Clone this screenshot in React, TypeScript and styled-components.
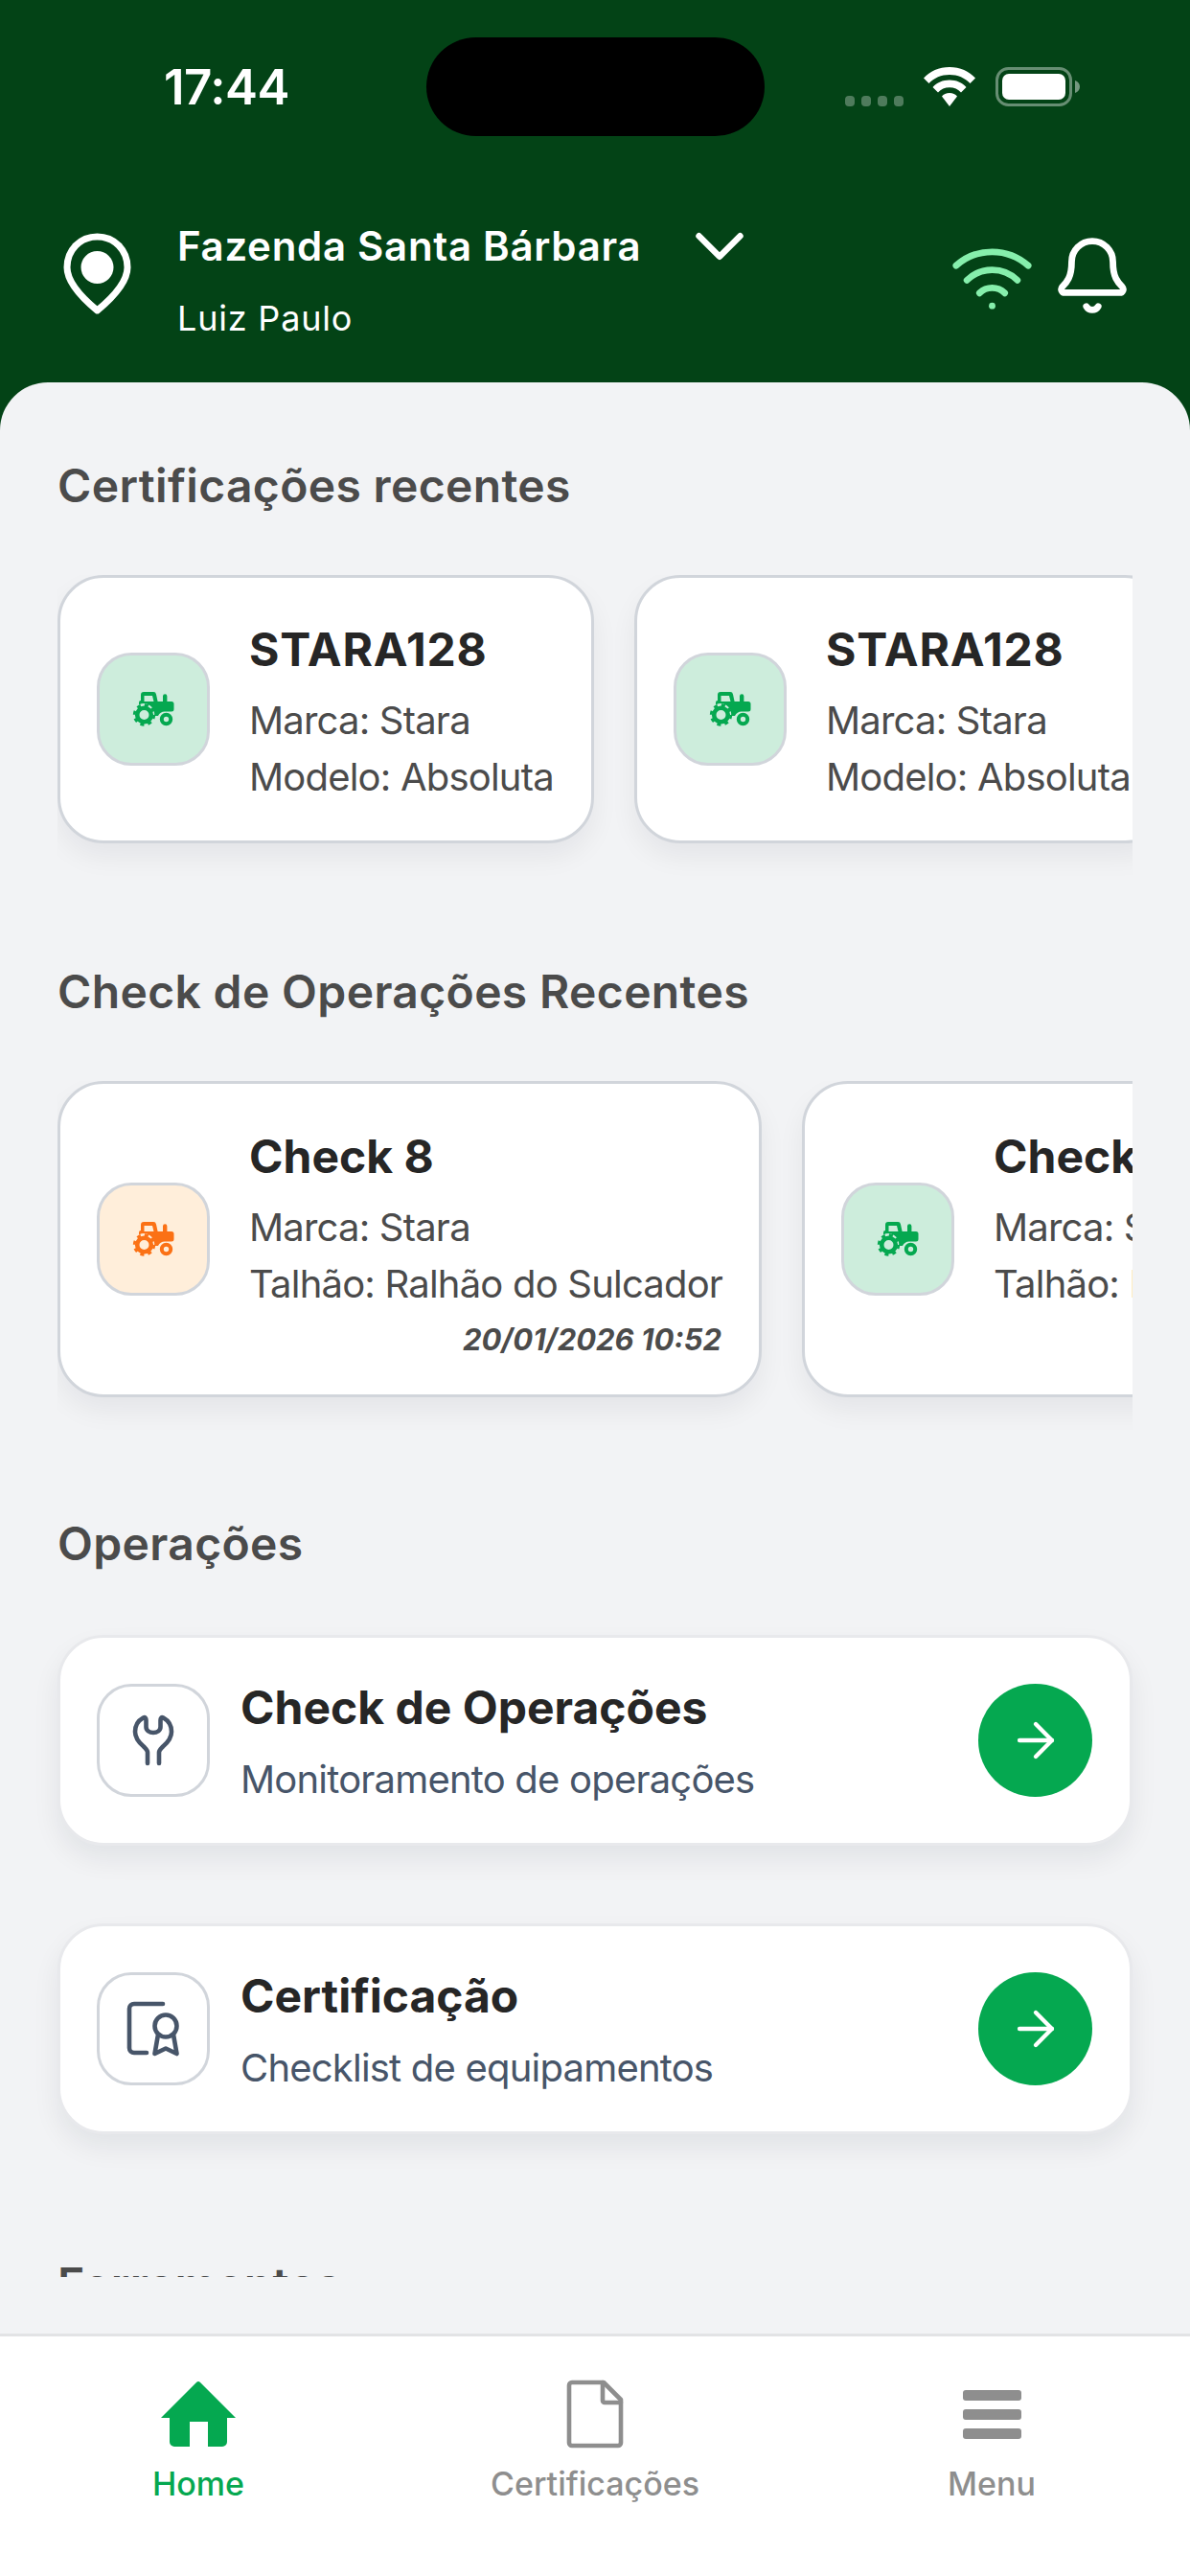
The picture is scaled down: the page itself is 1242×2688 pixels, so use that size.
import React from 'react';
import styled, { createGlobalStyle } from 'styled-components';
import { ArrowRight, ChevronDown } from 'lucide-react';

const GlobalStyle = createGlobalStyle`
	html, body {
		margin: 0;
		padding: 0;
		background: #034316;
		font-family: Inter, 'Liberation Sans', sans-serif;
	}
	* {
		box-sizing: border-box;
	}
`;

const Screen = styled.div`
	width: 1242px;
	height: 2688px;
	display: flex;
	flex-direction: column;
	background: #034316;
	overflow: hidden;
`;

const StatusBar = styled.div`
	height: 181px;
	padding: 39px 0 0 171px;
	display: flex;
	align-items: flex-start;
	color: #fff;
`;

const Time = styled.div`
	width: 274px;
	height: 103px;
	display: flex;
	align-items: center;
	font-size: 51px;
	font-weight: 600;
	letter-spacing: -0.5px;
`;

const Island = styled.div`
	width: 353px;
	height: 103px;
	border-radius: 52px;
	background: #000;
`;

const StatusIcons = styled.div`
	margin: 31px 0 0 84px;
	display: flex;
	align-items: flex-end;
	gap: 20px;
`;

const Dots = styled.div`
	display: flex;
	gap: 7px;
`;

const Dot = styled.span`
	width: 10px;
	height: 11px;
	border-radius: 4px;
	background: rgba(255, 255, 255, 0.3);
`;

const HeaderRow = styled.div`
	height: 218px;
	padding: 62px 66px 0;
	display: flex;
	align-items: flex-start;
`;

const Farm = styled.div`
	margin-left: 48px;
	margin-top: -15px;
	color: #fff;
`;

const FarmLine = styled.div`
	display: flex;
	align-items: center;
	height: 58px;
`;

const FarmName = styled.div`
	font-size: 42px;
	font-weight: 600;
	line-height: 58px;
	letter-spacing: 0.7px;
`;

const Chevron = styled(ChevronDown)`
	margin: -14px -14px -14px 39px;
	color: #fff;
`;

const UserName = styled.div`
	margin-top: 24px;
	font-size: 36px;
	line-height: 44px;
	letter-spacing: 0.8px;
`;

const HeaderActions = styled.div`
	margin-left: auto;
	display: flex;
	align-items: flex-start;
	gap: 27px;
`;

const WifiWrap = styled.span`
	display: flex;
	margin-top: 16px;
`;

const BellWrap = styled.span`
	display: flex;
	margin-top: 5px;
`;

const Panel = styled.main`
	flex: 1;
	min-height: 0;
	background: #f2f3f5;
	border-radius: 50px 50px 0 0;
	display: flex;
	flex-direction: column;
`;

const Scroll = styled.div`
	height: 1977px;
	padding-top: 79px;
	overflow: hidden;
`;

const Heading = styled.h2`
	margin: 0 0 0 60px;
	font-size: 48px;
	line-height: 58px;
	font-weight: 600;
	letter-spacing: 0.35px;
	color: #4b4b4b;
`;

const Carousel = styled.div<{ $after: number }>`
	margin: 64px 0 0 60px;
	width: 1122px;
	padding-bottom: ${({ $after }) => $after}px;
	display: flex;
	gap: 42px;
	overflow: hidden;
`;

const Card = styled.article<{ $width: number; $height: number }>`
	flex: none;
	width: ${({ $width }) => $width}px;
	height: ${({ $height }) => $height}px;
	padding-left: 38px;
	display: flex;
	align-items: center;
	gap: 41px;
	background: #fff;
	border: 3px solid #d1d5db;
	border-radius: 48px;
	box-shadow: 0 14px 28px rgba(17, 24, 39, 0.06);
`;

const IconBox = styled.div<{ $tone: 'green' | 'orange' | 'plain' }>`
	flex: none;
	width: 118px;
	height: 118px;
	display: flex;
	align-items: center;
	justify-content: center;
	border: 3px solid #d1d5db;
	border-radius: 36px;
	background: ${({ $tone }) => ($tone === 'green' ? '#cdeddc' : $tone === 'orange' ? '#ffeeda' : '#fff')};
	color: ${({ $tone }) => ($tone === 'green' ? '#05a850' : $tone === 'orange' ? '#fb7115' : '#475569')};
`;

const CardBody = styled.div<{ $offset: number }>`
	min-width: 0;
	flex: 1;
	padding-top: ${({ $offset }) => $offset}px;
	white-space: nowrap;
`;

const CardTitle = styled.div<{ $tracking?: number }>`
	font-size: 48px;
	line-height: 58px;
	font-weight: 700;
	letter-spacing: ${({ $tracking }) => $tracking ?? 0}px;
	color: #262626;
	margin-bottom: 15px;
`;

const CardLine = styled.div`
	font-size: 40px;
	line-height: 59px;
	letter-spacing: -0.8px;
	color: #4b4b4b;
`;

const CardDate = styled.div`
	padding-right: 39px;
	text-align: right;
	font-size: 31px;
	line-height: 58px;
	font-weight: 700;
	font-style: italic;
	color: #4b4b4b;
`;

const OpList = styled.div`
	margin: 66px 60px 0;
	padding-bottom: 128px;
	display: flex;
	flex-direction: column;
	gap: 81px;
`;

const OpCard = styled.article`
	height: 220px;
	padding: 0 39px 0 38px;
	display: flex;
	align-items: center;
	background: #fff;
	border: 3px solid #e8e9ec;
	border-radius: 48px;
	box-shadow: 0 14px 28px rgba(17, 24, 39, 0.07);
`;

const OpText = styled.div`
	flex: 1;
	margin-left: 32px;
	padding-top: 6px;
`;

const OpTitle = styled.div`
	font-size: 48px;
	line-height: 58px;
	font-weight: 700;
	color: #262626;
	margin-bottom: 17px;
`;

const OpSub = styled.div`
	font-size: 40px;
	line-height: 58px;
	letter-spacing: -0.8px;
	color: #475569;
`;

const GoButton = styled.div`
	width: 119px;
	height: 118px;
	border-radius: 50%;
	display: flex;
	align-items: center;
	justify-content: center;
	background: #05a850;
	color: #fff;
`;

const BottomNav = styled.nav`
	height: 253px;
	padding-top: 45px;
	display: grid;
	grid-template-columns: repeat(3, 1fr);
	background: #fff;
	border-top: 3px solid #e2e3e5;
`;

const NavItem = styled.div<{ $active?: boolean }>`
	display: flex;
	flex-direction: column;
	align-items: center;
	color: ${({ $active }) => ($active ? '#05a850' : '#8e8e8e')};
`;

const NavIcon = styled.div`
	height: 72px;
	display: flex;
	align-items: center;
	justify-content: center;
`;

const NavLabel = styled.div`
	margin-top: 15px;
	font-size: 34px;
	line-height: 44px;
	font-weight: 500;
`;

const MenuBars = styled.div`
	width: 61px;
	display: flex;
	flex-direction: column;
	gap: 9px;
`;

const MenuBar = styled.span`
	height: 11px;
	border-radius: 3px;
	background: #8e8e8e;
`;

const Tractor = () => (
	<svg width="44" height="36" viewBox="0 0 44 36" fill="currentColor">
		<path
			fillRule="evenodd"
			d="M9 3a3 3 0 0 1 3-3h10a3 3 0 0 1 3 2.4L26.6 10H32V4.5a2.2 2.2 0 0 1 4.4 0V10h4.600a2.500 2.500 0 0 1 2.500 2.500V18a2.500 2.500 0 0 1-2.500 2.500H35a8 8 0 0 0-8 4.500H23A11 11 0 0 0 7 13.500V11a2 2 0 0 1 2-2zM12.500 4v6h10L21 4z"
		/>
		<circle cx="12.500" cy="24" r="7.300" fill="none" stroke="currentColor" strokeWidth="4.600" />
		<circle cx="12.500" cy="24" r="10.300" fill="none" stroke="currentColor" strokeWidth="2.800" strokeDasharray="4 4.100" />
		<circle cx="35.500" cy="28.500" r="4.700" fill="none" stroke="currentColor" strokeWidth="4" />
	</svg>
);

const Wrench = () => (
	<svg width="44" height="54" viewBox="0 0 44 54" fill="none" stroke="currentColor" strokeWidth="4.600" strokeLinecap="round" strokeLinejoin="round">
		<path d="M16 51V39.500C16 37 14.500 36 12 33.500C6 28.500 3 24 3 18C3 11 7 6 11.500 3.500C13.500 2.500 14.500 4 14.500 6V13C14.500 21 29.500 21 29.500 13V6C29.500 4 30.500 2.500 32.500 3.500C37 6 41 11 41 18C41 24 38 28.500 32 33.500C29.500 36 28 37 28 39.500V51" />
	</svg>
);

const Certificate = () => (
	<svg width="56" height="58" viewBox="0 0 56 58" fill="none" stroke="currentColor" strokeWidth="4.600" strokeLinecap="round" strokeLinejoin="round">
		<path d="M38 3H8a5 5 0 0 0-5 5v41a5 5 0 0 0 5 5h13" />
		<circle cx="41" cy="26" r="11.500" />
		<path d="M33 35L29.500 55L41 49.500L52.500 55L49 35" />
	</svg>
);

const PinIcon = () => (
	<svg width="71" height="85" viewBox="0 0 71 85">
		<path d="M35.500 4C17.500 4 4 18 4 36C4 52 21 69 35.500 81C50 69 67 52 67 36C67 18 53.500 4 35.500 4Z" fill="none" stroke="#fff" strokeWidth="7" strokeLinejoin="round" />
		<circle cx="35.500" cy="36" r="17" fill="#fff" />
	</svg>
);

const HeaderWifi = () => (
	<svg width="83" height="64" viewBox="1 4 22 17" fill="none" stroke="#86efac" strokeWidth="1.800" strokeLinecap="round" strokeLinejoin="round">
		<path d="M12 20h.01" />
		<path d="M2 8.820a15 15 0 0 1 20 0" />
		<path d="M5 12.859a10 10 0 0 1 14 0" />
		<path d="M8.500 16.429a5 5 0 0 1 7 0" />
	</svg>
);

const BellIcon = () => (
	<svg width="72" height="79" viewBox="2 1 20 22" fill="none" stroke="#fff" strokeWidth="1.900" strokeLinecap="round" strokeLinejoin="round">
		<path d="M10.268 21a2 2 0 0 0 3.464 0" />
		<path d="M3.262 15.326A1 1 0 0 0 4 17h16a1 1 0 0 0 .740-1.673C19.410 13.956 18 12.499 18 8A6 6 0 0 0 6 8c0 4.499-1.411 5.956-2.738 7.326" />
	</svg>
);

const StatusWifi = () => (
	<svg width="56" height="41" viewBox="0 0 56 41" fill="#fff">
		<path d="M28 0C17 0 7.500 4.300 1 11.500L6.500 17C11.800 11.300 19.500 8 28 8S44.200 11.300 49.500 17L55 11.500C48.500 4.300 39 0 28 0Z" />
		<path d="M28 13.500C21 13.500 14.800 16.200 10.500 21L16 26.500C19 23.200 23.200 21.300 28 21.300S37 23.200 40 26.500L45.500 21C41.200 16.200 35 13.500 28 13.500Z" />
		<path d="M28 27C24.600 27 21.800 28.200 20 30.500L28 41L36 30.500C34.200 28.200 31.400 27 28 27Z" />
	</svg>
);

const Battery = () => (
	<svg width="88" height="41" viewBox="0 0 88 41">
		<rect x="1.500" y="1.500" width="77" height="38" rx="12" fill="none" stroke="rgba(255,255,255,0.4)" strokeWidth="3" />
		<rect x="7" y="7" width="66" height="27" rx="7" fill="#fff" />
		<path d="M83 14C86 15 88 17.500 88 20.500S86 26 83 27Z" fill="rgba(255,255,255,0.45)" />
	</svg>
);

const HomeIcon = () => (
	<svg width="78" height="68" viewBox="0 0 78 68" fill="currentColor">
		<path
			fillRule="evenodd"
			d="M37 1a3 3 0 0 1 4 0L78 38H69V63a5 5 0 0 1-5 5H14a5 5 0 0 1-5-5V38H0ZM30 42V68H49V42Z"
		/>
	</svg>
);

const DocIcon = () => (
	<svg width="60" height="72" viewBox="0 0 60 72" fill="none" stroke="currentColor" strokeWidth="4.600" strokeLinecap="round" strokeLinejoin="round">
		<path d="M39 3H6a3 3 0 0 0-3 3v60a3 3 0 0 0 3 3h48a3 3 0 0 0 3-3V21Z" />
		<path d="M38 3V22a2 2 0 0 0 2 2H57" />
	</svg>
);

const certifications = [
	{ id: 1, title: 'STARA128', lines: ['Marca: Stara', 'Modelo: Absoluta'] },
	{ id: 2, title: 'STARA128', lines: ['Marca: Stara', 'Modelo: Absoluta'] },
];

const checks = [
	{ id: 1, title: 'Check 8', tone: 'orange' as const, lines: ['Marca: Stara', 'Talhão: Ralhão do Sulcador'], date: '20/01/2026 10:52' },
	{ id: 2, title: 'Check 7', tone: 'green' as const, lines: ['Marca: Stara', 'Talhão: Ralhão do Sulcador'], date: '20/01/2026 10:52' },
];

const App: React.FC = () => (
	<Screen>
		<GlobalStyle />
		<StatusBar>
			<Time>17:44</Time>
			<Island />
			<StatusIcons>
				<Dots>
					<Dot />
					<Dot />
					<Dot />
					<Dot />
				</Dots>
				<StatusWifi />
				<Battery />
			</StatusIcons>
		</StatusBar>

		<HeaderRow>
			<PinIcon />
			<Farm>
				<FarmLine>
					<FarmName>Fazenda Santa Bárbara</FarmName>
					<Chevron size={86} strokeWidth={1.800} />
				</FarmLine>
				<UserName>Luiz Paulo</UserName>
			</Farm>
			<HeaderActions>
				<WifiWrap>
					<HeaderWifi />
				</WifiWrap>
				<BellWrap>
					<BellIcon />
				</BellWrap>
			</HeaderActions>
		</HeaderRow>

		<Panel>
			<Scroll>
				<Heading>Certificações recentes</Heading>
				<Carousel $after={126}>
					{certifications.map((item) => (
						<Card key={item.id} $width={560} $height={280}>
							<IconBox $tone="green">
								<Tractor />
							</IconBox>
							<CardBody $offset={8}>
								<CardTitle $tracking={0.8}>{item.title}</CardTitle>
								{item.lines.map((line) => (
									<CardLine key={line}>{line}</CardLine>
								))}
							</CardBody>
						</Card>
					))}
				</Carousel>

				<Heading>Check de Operações Recentes</Heading>
				<Carousel $after={124}>
					{checks.map((item) => (
						<Card key={item.id} $width={735} $height={330}>
							<IconBox $tone={item.tone}>
								<Tractor />
							</IconBox>
							<CardBody $offset={18}>
								<CardTitle>{item.title}</CardTitle>
								{item.lines.map((line) => (
									<CardLine key={line}>{line}</CardLine>
								))}
								<CardDate>{item.date}</CardDate>
							</CardBody>
						</Card>
					))}
				</Carousel>

				<Heading>Operações</Heading>
				<OpList>
					<OpCard>
						<IconBox $tone="plain">
							<Wrench />
						</IconBox>
						<OpText>
							<OpTitle>Check de Operações</OpTitle>
							<OpSub>Monitoramento de operações</OpSub>
						</OpText>
						<GoButton>
							<ArrowRight size={58} strokeWidth={1.800} />
						</GoButton>
					</OpCard>
					<OpCard>
						<IconBox $tone="plain">
							<Certificate />
						</IconBox>
						<OpText>
							<OpTitle>Certificação</OpTitle>
							<OpSub>Checklist de equipamentos</OpSub>
						</OpText>
						<GoButton>
							<ArrowRight size={58} strokeWidth={1.800} />
						</GoButton>
					</OpCard>
				</OpList>

				<Heading>Ferramentas</Heading>
			</Scroll>
		</Panel>

		<BottomNav>
			<NavItem $active>
				<NavIcon>
					<HomeIcon />
				</NavIcon>
				<NavLabel>Home</NavLabel>
			</NavItem>
			<NavItem>
				<NavIcon>
					<DocIcon />
				</NavIcon>
				<NavLabel>Certificações</NavLabel>
			</NavItem>
			<NavItem>
				<NavIcon>
					<MenuBars>
						<MenuBar />
						<MenuBar />
						<MenuBar />
					</MenuBars>
				</NavIcon>
				<NavLabel>Menu</NavLabel>
			</NavItem>
		</BottomNav>
	</Screen>
);

export default App;
